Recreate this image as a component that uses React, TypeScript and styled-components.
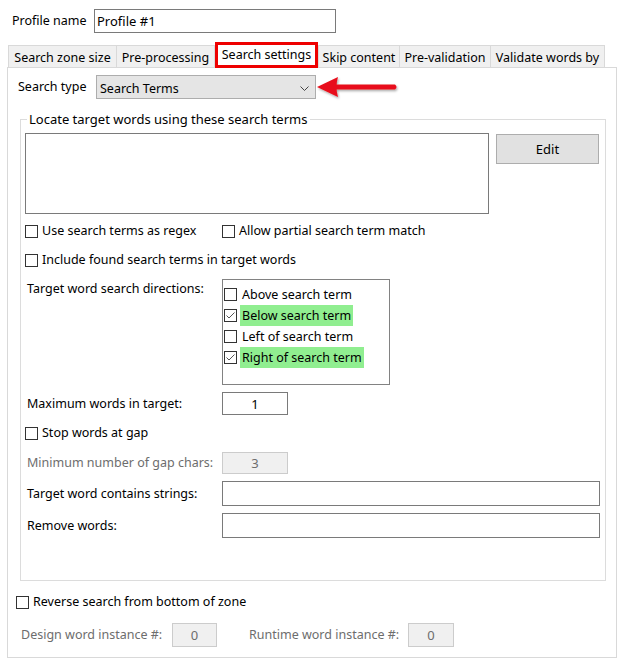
import React from "react";
import styled, { createGlobalStyle } from "styled-components";

const Global = createGlobalStyle`
  html, body { margin: 0; padding: 0; background: #ffffff; }
  body { font-family: "Noto Sans", "Open Sans", sans-serif; font-size: 12.5px; color: #000; }
  * { box-sizing: border-box; }
`;

const Root = styled.div`
  position: relative;
  width: 625px;
  height: 666px;
  background: #fff;
  overflow: hidden;
`;

const ProfileRow = styled.div`
  display: flex;
  align-items: center;
  padding: 9px 0 0 12px;
  height: 33px;
`;

const Label = styled.span<{ $w?: number; $muted?: boolean }>`
  display: inline-block;
  flex: none;
  width: ${(p) => (p.$w ? `${p.$w}px` : "auto")};
  color: ${(p) => (p.$muted ? "#6d6d6d" : "#000")};
  white-space: nowrap;
  line-height: 16px;
`;

const TextBox = styled.div<{ $w: number; $h: number; $center?: boolean; $disabled?: boolean }>`
  flex: none;
  width: ${(p) => p.$w}px;
  height: ${(p) => p.$h}px;
  border: 1px solid ${(p) => (p.$disabled ? "#cccccc" : "#7a7a7a")};
  background: ${(p) => (p.$disabled ? "#f0f0f0" : "#fff")};
  color: ${(p) => (p.$disabled ? "#6d6d6d" : "#000")};
  display: flex;
  align-items: center;
  justify-content: ${(p) => (p.$center ? "center" : "flex-start")};
  padding: 0 ${(p) => (p.$center ? 0 : 2)}px;
  font-size: 13px;
  line-height: 16px;
`;

const TabStrip = styled.div`
  display: flex;
  align-items: flex-end;
  height: 34px;
  padding-left: 8px;
`;

const Tab = styled.div<{ $w: number }>`
  flex: none;
  width: ${(p) => p.$w}px;
  height: 22px;
  margin-right: -1px;
  border: 1px solid #d9d9d9;
  border-bottom: none;
  background: #f0f0f0;
  display: flex;
  align-items: center;
  justify-content: center;
  padding-top: 2px;
  white-space: nowrap;
`;

const ActiveTab = styled.div<{ $w: number }>`
  flex: none;
  position: relative;
  z-index: 2;
  width: ${(p) => p.$w}px;
  height: 26px;
  margin: 0 0 -1px 1px;
  border: 3px solid #ee0000;
  background: #fff;
  display: flex;
  align-items: center;
  justify-content: center;
  padding-bottom: 2px;
  white-space: nowrap;
`;

const Panel = styled.div`
  margin-left: 7px;
  width: 610px;
  height: 591px;
  border: 1px solid #d9d9d9;
  background: #fff;
  display: flex;
  flex-direction: column;
  position: relative;
`;

const Row = styled.div<{ $mt: number; $pl?: number; $h?: number }>`
  display: flex;
  align-items: center;
  margin-top: ${(p) => p.$mt}px;
  padding-left: ${(p) => p.$pl ?? 0}px;
  height: ${(p) => (p.$h ? `${p.$h}px` : "auto")};
`;

const Select = styled.div`
  flex: none;
  width: 220px;
  height: 24px;
  border: 1px solid #adadad;
  background: #e5e5e5;
  display: flex;
  align-items: center;
  justify-content: space-between;
  padding: 2px 6px 0 3px;
`;

const Arrow = styled.svg`
  position: absolute;
  left: 308px;
  top: 7px;
  overflow: visible;
`;

const GroupBox = styled.fieldset`
  margin: 20px 0 0 12px;
  padding: 0;
  width: 586px;
  height: 462px;
  border: 1px solid #dcdcdc;
  position: relative;
  display: flex;
  flex-direction: column;
`;

const Legend = styled.div`
  position: absolute;
  left: 6px;
  top: -9px;
  background: #fff;
  padding: 0 3px 0 2px;
  line-height: 16px;
  font-size: 13px;
`;

const TermsRow = styled.div`
  display: flex;
  align-items: flex-start;
  gap: 7px;
  margin-top: 13px;
  padding-left: 4px;
`;

const TermsArea = styled.div`
  width: 464px;
  height: 81px;
  border: 1px solid #7a7a7a;
  background: #fff;
`;

const Button = styled.div`
  margin-top: 1px;
  width: 103px;
  height: 30px;
  border: 1px solid #adadad;
  background: #e1e1e1;
  display: flex;
  align-items: center;
  justify-content: center;
  font-size: 13px;
`;

const Check = styled.span<{ $gap?: number }>`
  display: inline-flex;
  align-items: center;
  gap: ${(p) => p.$gap ?? 4}px;
  white-space: nowrap;
  line-height: 16px;
`;

const Box = styled.span`
  flex: none;
  width: 13px;
  height: 13px;
  border: 1px solid #333333;
  background: #fff;
  display: inline-flex;
  align-items: center;
  justify-content: center;
`;

const DirBox = styled.div`
  flex: none;
  width: 168px;
  height: 106px;
  border: 1px solid #828282;
  padding: 4px 0 0 1px;
  display: flex;
  flex-direction: column;
`;

const DirItem = styled.div`
  height: 21px;
  display: flex;
  align-items: center;
  gap: 3px;
`;

const Hl = styled.span<{ $on?: boolean }>`
  height: 21px;
  display: inline-flex;
  align-items: center;
  padding: 0 2px;
  background: ${(p) => (p.$on ? "#90ee90" : "transparent")};
  white-space: nowrap;
`;

const DirRow = styled.div`
  display: flex;
  align-items: flex-start;
  margin-top: 10px;
  padding-left: 6px;
`;

const CheckBox: React.FC<{ checked?: boolean }> = ({ checked }) => (
  <Box>
    {checked && (
      <svg width="11" height="11" viewBox="0 0 11 11">
        <polyline points="1.5,5.5 4,8 9.5,2.5" fill="none" stroke="#555" strokeWidth="1" />
      </svg>
    )}
  </Box>
);

const tabs: [string, number][] = [
  ["Search zone size", 109],
  ["Pre-processing", 99],
];
const tabsAfter: [string, number][] = [
  ["Skip content", 82],
  ["Pre-validation", 92],
  ["Validate words by", 115],
];

export default function App() {
  return (
    <Root>
      <Global />
      <ProfileRow>
        <Label $w={82}>Profile name</Label>
        <TextBox $w={242} $h={24}>Profile #1</TextBox>
      </ProfileRow>
      <TabStrip>
        {tabs.map(([t, w]) => (
          <Tab key={t} $w={w}>{t}</Tab>
        ))}
        <ActiveTab $w={103}>Search settings</ActiveTab>
        {tabsAfter.map(([t, w]) => (
          <Tab key={t} $w={w}>{t}</Tab>
        ))}
      </TabStrip>
      <Panel>
        <Row $mt={7} $pl={10}>
          <Label $w={78}>Search type</Label>
          <Select>
            <span>Search Terms</span>
            <svg width="9" height="5" viewBox="0 0 9 5">
              <polyline points="0.5,0.5 4.5,4.5 8.5,0.5" fill="none" stroke="#444" strokeWidth="1" />
            </svg>
          </Select>
        </Row>
        <Arrow width="80" height="26" viewBox="0 0 80 26">
          <defs>
            <filter id="sh" x="-20%" y="-40%" width="140%" height="180%">
              <feDropShadow dx="1" dy="1.5" stdDeviation="1.2" floodColor="#000" floodOpacity="0.35" />
            </filter>
          </defs>
          <g filter="url(#sh)">
            <path d="M1 12 L22 2 Q19 12 22 22 Z" fill="#e8101a" />
            <path d="M19 9.5 L79 9.5 Q82 12 79 14.5 L19 14.5 Z" fill="#e8101a" />
          </g>
        </Arrow>
        <GroupBox>
          <Legend>Locate target words using these search terms</Legend>
          <TermsRow>
            <TermsArea />
            <Button>Edit</Button>
          </TermsRow>
          <Row $mt={8} $pl={4} $h={18}>
            <Check style={{ width: 197 }}>
              <CheckBox />
              Use search terms as regex
            </Check>
            <Check>
              <CheckBox />
              Allow partial search term match
            </Check>
          </Row>
          <Row $mt={11} $pl={4} $h={18}>
            <Check>
              <CheckBox />
              Include found search terms in target words
            </Check>
          </Row>
          <DirRow>
            <Label $w={195} style={{ marginTop: 2 }}>Target word search directions:</Label>
            <DirBox>
              <DirItem>
                <CheckBox />
                <Hl>Above search term</Hl>
              </DirItem>
              <DirItem>
                <CheckBox checked />
                <Hl $on>Below search term</Hl>
              </DirItem>
              <DirItem>
                <CheckBox />
                <Hl>Left of search term</Hl>
              </DirItem>
              <DirItem>
                <CheckBox checked />
                <Hl $on>Right of search term</Hl>
              </DirItem>
            </DirBox>
          </DirRow>
          <Row $mt={7} $pl={6}>
            <Label $w={195}>Maximum words in target:</Label>
            <TextBox $w={66} $h={23} $center>1</TextBox>
          </Row>
          <Row $mt={9} $pl={4} $h={18}>
            <Check>
              <CheckBox />
              Stop words at gap
            </Check>
          </Row>
          <Row $mt={10} $pl={6}>
            <Label $w={195} $muted>Minimum number of gap chars:</Label>
            <TextBox $w={66} $h={22} $center $disabled>3</TextBox>
          </Row>
          <Row $mt={7} $pl={6}>
            <Label $w={195}>Target word contains strings:</Label>
            <TextBox $w={378} $h={25} />
          </Row>
          <Row $mt={7} $pl={6}>
            <Label $w={195}>Remove words:</Label>
            <TextBox $w={378} $h={25} />
          </Row>
        </GroupBox>
        <Row $mt={12} $pl={8} $h={18}>
          <Check>
            <CheckBox />
            Reverse search from bottom of zone
          </Check>
        </Row>
        <Row $mt={12} $pl={13}>
          <Label $w={151} $muted>Design word instance #:</Label>
          <TextBox $w={45} $h={24} $center $disabled>0</TextBox>
          <Label $w={159} $muted style={{ marginLeft: 32 }}>Runtime word instance #:</Label>
          <TextBox $w={46} $h={24} $center $disabled>0</TextBox>
        </Row>
      </Panel>
    </Root>
  );
}
